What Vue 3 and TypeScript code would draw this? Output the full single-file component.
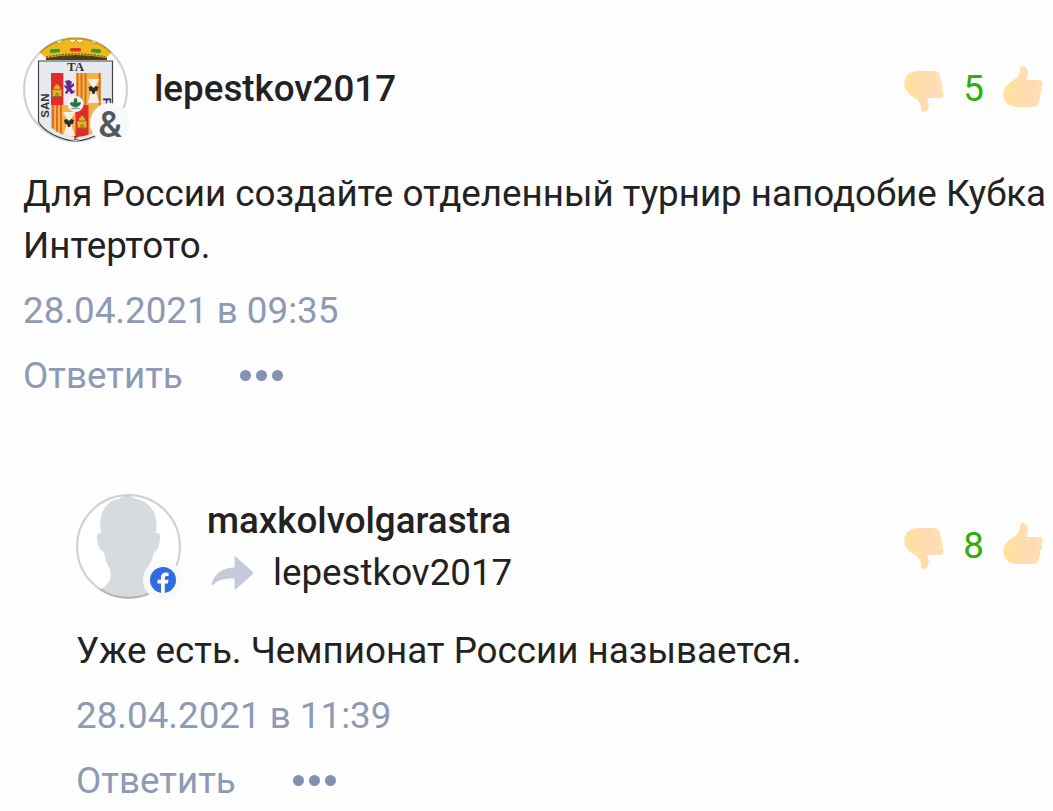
<template>
  <main class="comments">
    <article
      v-for="comment in comments"
      :key="comment.id"
      class="comment"
      :class="{ 'comment--reply': comment.replyTo }"
    >
      <header class="comment-header">
        <div class="avatar">
          <svg v-if="comment.avatar === 'crest'" class="avatar-image" viewBox="0 0 105 105">
            <defs>
              <clipPath id="crest-clip"><circle cx="52.5" cy="52.5" r="52" /></clipPath>
              <clipPath id="shield-clip"><path d="M28 36H78V90Q70 99 53 100Q36 99 28 90Z" /></clipPath>
              <g id="castle">
                <path d="M-4.500 6V-1H-3V-4H-1.500V-6H1.500V-4H3V-1H4.500V6Z" fill="#d9b62b" />
                <path d="M-5 6H5M-3 -1H3M-1 6V3H1V6" fill="none" stroke="#94701c" stroke-width="1" />
              </g>
              <g id="eagle">
                <path d="M-6 -9H6L2 -2L2 3L6 15H-6L-2 3L-2 -2Z" fill="#f4eee8" />
                <path d="M-5 -1L-2 -2L0 0L2 -2L5 -1L4 3L2 3L1 6H-1L-2 3L-4 3Z" fill="#2f2c2c" />
              </g>
            </defs>
            <g clip-path="url(#crest-clip)">
              <rect width="105" height="105" fill="#fff" />
              <path d="M15.500 24H89.500V85Q81 99 52.500 105Q24 99 15.500 85Z" fill="#e6e9ee" stroke="#414347" stroke-width="1.2" />
              <path d="M23 18H84V23H23Z" fill="#4b3f18" />
              <path d="M14 13Q18 5 27 4Q33 0 40 2Q46 -1 53 1Q60 -1 66 2Q74 0 79 4Q88 5 91 13L83 21Q53 15 23 21Z" fill="#edb91c" />
              <path d="M33 4Q36 10 40 3M46 3Q49 9 53 3Q57 9 61 3M67 3Q71 10 75 4M20 9Q24 12 27 7M79 7Q82 12 86 9" fill="#fff7df" stroke="#b98708" stroke-width=".8" />
              <path d="M23 20Q53 14 83 20" fill="none" stroke="#80611b" stroke-width="1.5" stroke-dasharray="2 1.2" />
              <rect x="27" y="12" width="10" height="3.6" rx="1.5" fill="#2f9b35" transform="rotate(-5 32 14)" />
              <rect x="47" y="11" width="11" height="3.6" rx="1.5" fill="#de3428" />
              <rect x="68" y="12" width="10" height="3.6" rx="1.5" fill="#2f9b35" transform="rotate(5 73 14)" />
              <g clip-path="url(#shield-clip)">
                <rect x="28" y="36" width="50" height="69" fill="#f3b445" />
                <path d="M30 68V105M34 68V105M38 68V105M54.500 36V68M58.500 36V68M62.500 36V68M76.500 36V68" stroke="#db6428" stroke-width="1.8" />
                <rect x="28" y="36" width="12.500" height="32" fill="#e42a2c" />
                <rect x="40.500" y="36" width="12.500" height="32" fill="#eee9ef" />
                <rect x="52.500" y="68" width="13" height="36" fill="#e42a2c" />
                <use href="#castle" x="34" y="53.500" />
                <use href="#castle" x="59" y="85" />
                <use href="#eagle" x="70.500" y="51" />
                <use href="#eagle" x="46" y="84" />
                <path d="M42 44l4-1 3 2-1 3 3-2v3l-3 2 2 3 2-1-1 3-3 1-2-3-2 3-2-1 2-4-2-1-1-3 3 1Z" fill="#5f2b8c" />
              </g>
              <circle cx="52.500" cy="67" r="8" fill="#f2f2ef" />
              <path d="M47 66q2-2 3.500 0q0-5 2-5t2 5q3-2 3.500 0-1 4-5.500 4-5 0-5.500-4ZM47 72q5.500-3 11 0l-5.500-.5Z" fill="#28734d" />
              <text x="52.500" y="34" class="crest-text" text-anchor="middle">TA</text>
              <text x="25.500" y="68.500" class="crest-text crest-text--sans" text-anchor="middle" transform="rotate(-90 25.500 68.500)">SAN</text>
              <text x="80" y="68" class="crest-text crest-text--sans" text-anchor="middle" transform="rotate(90 80 68)">FE</text>
              <text x="53" y="103" class="crest-text crest-text--small" text-anchor="middle">E</text>
            </g>
            <circle cx="52.500" cy="52.500" r="51.400" fill="none" stroke="#000" stroke-opacity=".18" stroke-width="2.200" />
          </svg>

          <svg v-else class="avatar-image" viewBox="0 0 105 105">
            <defs>
              <clipPath id="person-clip"><circle cx="52.500" cy="52.500" r="52" /></clipPath>
            </defs>
            <circle cx="52.500" cy="52.500" r="52" fill="#fff" />
            <path
              clip-path="url(#person-clip)"
              d="M23 96Q31 92 34 86Q36 78 33 73Q29 67 28 58Q23 57 21 46Q20 39 25 39Q22 20 31 11Q36 5 43 5Q51 -1 60 5Q69 6 76 15Q82 23 80 39Q85 38 84 45Q83 57 78 58Q77 65 72 73Q68 82 76 89L94 96V106H12Z"
              fill="#d5dbde"
            />
            <circle cx="52.500" cy="52.500" r="51.400" fill="none" stroke="#000" stroke-opacity=".18" stroke-width="2.200" />
          </svg>

          <span class="badge">
            <span v-if="comment.badge === 'ampersand'" class="ampersand">&amp;</span>
            <svg v-else width="26" height="26" viewBox="0 0 26 26">
              <circle cx="13" cy="13" r="13" fill="#316be2" />
              <path d="M11 26V16.500H7.500V12.800H11V10.200Q11 5.500 16 5.500Q17.600 5.500 18.600 5.800V9H16.800Q14.800 9 14.800 10.900V12.800H18.500L17.900 16.500H14.800V26Z" fill="#fff" />
            </svg>
          </span>
        </div>

        <div class="names">
          <div class="author">{{ comment.author }}</div>
          <div v-if="comment.replyTo" class="reply-to">
            <svg class="reply-arrow" width="44" height="36" viewBox="0 0 44 36">
              <path d="M23.500 2.500Q23.500 1 25 2L41.500 16.500Q43 18 41.500 19.500L25 34Q23.500 35 23.500 33.500V23.500Q8 22.500 2 30Q.5 31.500 .5 29Q5 13 23.500 12.500Z" fill="#c5cada" />
            </svg>
            <span>{{ comment.replyTo }}</span>
          </div>
        </div>

        <div class="rating">
          <svg class="thumb thumb--down" width="40" height="44" viewBox="0 0 40 44">
            <use href="#thumb-shape" transform="translate(0 44) scale(1 -1)" />
          </svg>
          <span class="score">{{ comment.score }}</span>
          <svg class="thumb" width="40" height="44" viewBox="0 0 40 44">
            <defs>
              <linearGradient id="thumb-fill" x1="0" x2="1" y1=".3" y2=".5">
                <stop offset="0" stop-color="#ffe49a" />
                <stop offset=".75" stop-color="#ffdab6" />
                <stop offset="1" stop-color="#ffe2b0" />
              </linearGradient>
            </defs>
            <path
              id="thumb-shape"
              d="M17 5Q17.500 0 20.500 1Q25 3 24.800 8Q24.600 12 23 15H37Q40 15.500 39.700 19Q39.500 21 38 22Q39.800 24 38.500 27Q38 28.500 37 29Q38.500 32 36 35Q36.500 38 34 40.500Q32.500 42 29 42H14Q5 42 1.500 35Q-2 26 4 20Q7 17 12 14Q16.500 11 17 5Z"
              fill="url(#thumb-fill)"
            />
          </svg>
        </div>
      </header>

      <p class="text">{{ comment.text }}</p>
      <time class="date">{{ comment.date }}</time>
      <footer class="actions">
        <span class="answer">Ответить</span>
        <span class="more"><i v-for="n in 3" :key="n" class="dot"></i></span>
      </footer>
    </article>
  </main>
</template>

<script setup lang="ts">
type Comment = {
  id: number;
  author: string;
  replyTo?: string;
  avatar: "crest" | "person";
  badge: "ampersand" | "facebook";
  score: number;
  text: string;
  date: string;
};

const comments: Comment[] = [
  {
    id: 1,
    author: "lepestkov2017",
    avatar: "crest",
    badge: "ampersand",
    score: 5,
    text: "Для России создайте отделенный турнир наподобие Кубка Интертото.",
    date: "28.04.2021 в 09:35",
  },
  {
    id: 2,
    author: "maxkolvolgarastra",
    replyTo: "lepestkov2017",
    avatar: "person",
    badge: "facebook",
    score: 8,
    text: "Уже есть. Чемпионат России называется.",
    date: "28.04.2021 в 11:39",
  },
];
</script>

<style>
body {
  margin: 0;
  background: #fefefe;
}
</style>

<style scoped>
.comments {
  box-sizing: border-box;
  width: 1053px;
  height: 811px;
  padding: 37px 0 0 23px;
  overflow: hidden;
  display: flex;
  flex-direction: column;
  gap: 92px;
  font-family: Roboto, "Liberation Sans", sans-serif;
  font-size: 36.75px;
  line-height: 52px;
  color: #222;
}

.comment--reply {
  padding-left: 53px;
}

.comment-header {
  display: flex;
  align-items: center;
  height: 105px;
}

.avatar {
  position: relative;
  flex: none;
  width: 105px;
  height: 105px;
}

.avatar-image {
  display: block;
  width: 105px;
  height: 105px;
}

.crest-text {
  font-family: "Liberation Serif", serif;
  font-size: 13px;
  font-weight: 700;
  fill: #333539;
}

.crest-text--sans {
  font-family: "Liberation Sans", sans-serif;
  font-size: 11.5px;
}

.crest-text--small {
  font-size: 7px;
}

.badge {
  position: absolute;
  right: -2px;
  bottom: -1px;
  display: flex;
  align-items: center;
  justify-content: center;
  width: 40px;
  height: 40px;
  border-radius: 50%;
  background: #f8f9fb;
}

.ampersand {
  padding-top: 4px;
  font-size: 37px;
  line-height: 40px;
  font-weight: 500;
  color: #55585b;
}

.names {
  flex: 1;
  padding-left: 26px;
}

.author {
  font-weight: 500;
}

.comment:not(.comment--reply) .author {
  padding-bottom: 2px;
}

.reply-to {
  display: flex;
  align-items: center;
}

.reply-arrow {
  margin: 0 18px 0 4px;
}

.rating {
  display: flex;
  align-items: center;
  padding-right: 10px;
}

.thumb {
  display: block;
  margin-bottom: 6px;
}

.thumb--down {
  margin: 2px 0 0;
}

.score {
  width: 59px;
  padding-bottom: 1px;
  text-align: center;
  color: #2fae08;
}

.text {
  margin: 26px 0 0;
}

.date {
  display: block;
  margin-top: 13px;
  color: #8d99b5;
}

.actions {
  display: flex;
  align-items: center;
  margin-top: 13px;
  color: #8d99b5;
}

.more {
  display: flex;
  gap: 5px;
  margin: 0 0 2px 57px;
}

.dot {
  width: 11px;
  height: 11px;
  border-radius: 50%;
  background: #8590b4;
}
</style>
